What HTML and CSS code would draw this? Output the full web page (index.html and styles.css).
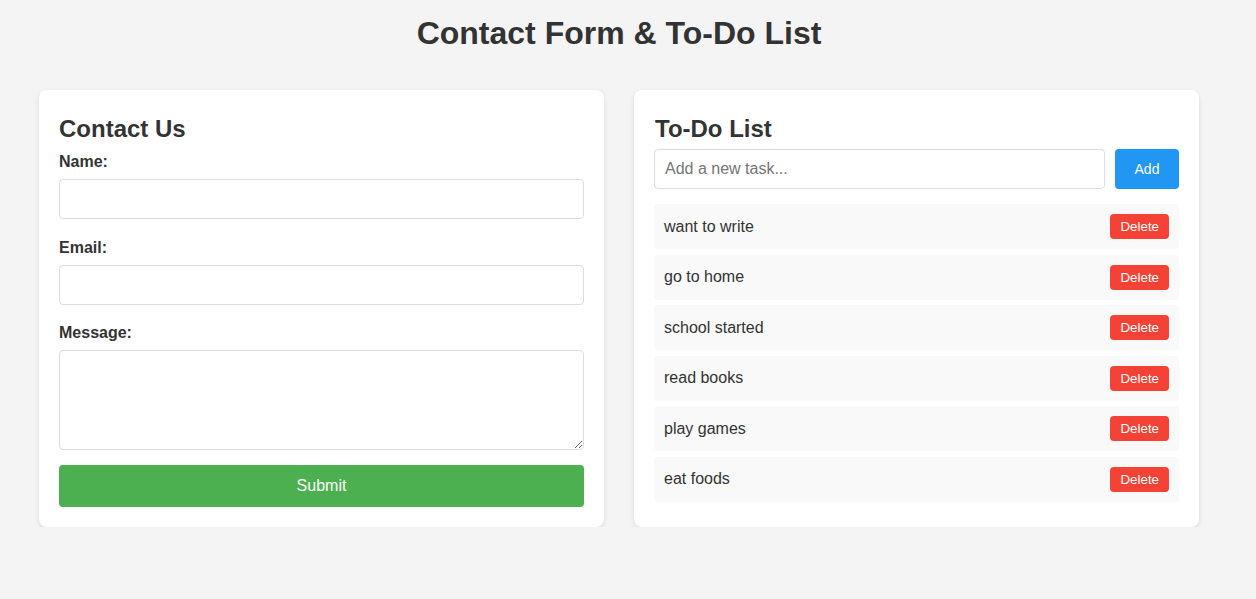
FILE: index.html
```html
<!DOCTYPE html>
<html lang="en">
<head>
<meta charset="UTF-8">
<title>Contact Form &amp; To-Do List</title>
<link rel="stylesheet" href="styles.css">
</head>
<body>
<div class="page">
  <h1 class="title">Contact Form &amp; To-Do List</h1>
  <div class="row">
    <section class="card">
      <h2 class="card-title">Contact Us</h2>
      <form class="contact-form">
        <label class="field-label" for="name">Name:</label>
        <input class="field" type="text" id="name">
        <label class="field-label" for="email">Email:</label>
        <input class="field" type="email" id="email">
        <label class="field-label" for="message">Message:</label>
        <textarea class="field field-area" id="message"></textarea>
        <button class="submit-btn" type="button">Submit</button>
      </form>
    </section>
    <section class="card">
      <h2 class="card-title todo-title">To-Do List</h2>
      <div class="todo-input-row">
        <input class="todo-input" type="text" placeholder="Add a new task...">
        <button class="add-btn" type="button">Add</button>
      </div>
      <ul class="todo-list">
        <li class="todo-item"><span>want to write</span><button class="delete-btn" type="button">Delete</button></li>
        <li class="todo-item"><span>go to home</span><button class="delete-btn" type="button">Delete</button></li>
        <li class="todo-item"><span>school started</span><button class="delete-btn" type="button">Delete</button></li>
        <li class="todo-item"><span>read books</span><button class="delete-btn" type="button">Delete</button></li>
        <li class="todo-item"><span>play games</span><button class="delete-btn" type="button">Delete</button></li>
        <li class="todo-item"><span>eat foods</span><button class="delete-btn" type="button">Delete</button></li>
      </ul>
    </section>
  </div>
</div>
</body>
</html>
```
FILE: styles.css
```css
* { box-sizing: border-box; }

body {
  margin: 0;
  background: #f4f4f4;
  font-family: "Liberation Sans", Arial, sans-serif;
  color: #333;
}

.page {
  padding: 15px 18px 0 0;
}

.title {
  margin: 0 0 38px;
  text-align: center;
  font-size: 32px;
  font-weight: bold;
  color: #333;
}

.row {
  display: flex;
  justify-content: center;
  gap: 30px;
}

.card {
  width: 565px;
  background: #fff;
  border-radius: 8px;
  padding: 20px;
  box-shadow: 0 2px 5px rgba(0, 0, 0, 0.1);
}

.card-title {
  margin: 5px 0 10px;
  font-size: 24px;
  font-weight: bold;
  color: #333;
}

.todo-title {
  margin-bottom: 6px;
  padding-left: 1px;
}

.contact-form {
  display: flex;
  flex-direction: column;
}

.field-label {
  display: block;
  font-weight: bold;
  font-size: 16px;
  margin-bottom: 8px;
}

.field {
  display: block;
  width: 100%;
  height: 40px;
  padding: 10px;
  border: 1px solid #ddd;
  border-radius: 4px;
  font-family: "Liberation Sans", Arial, sans-serif;
  font-size: 16px;
  margin: 0 0 19.5px;
  background: #fff;
}

.field-area {
  height: 100px;
  margin-bottom: 15px;
}

.submit-btn {
  display: block;
  width: 100%;
  height: 42px;
  border: none;
  border-radius: 4px;
  background: #4caf50;
  color: #fff;
  font-family: "Liberation Sans", Arial, sans-serif;
  font-size: 16px;
  cursor: pointer;
}

.todo-input-row {
  display: flex;
  gap: 10px;
  margin-bottom: 15px;
}

.todo-input {
  flex: 1;
  height: 40px;
  padding: 10px;
  border: 1px solid #ddd;
  border-radius: 4px;
  font-family: "Liberation Sans", Arial, sans-serif;
  font-size: 16px;
  color: #333;
}

.todo-input::placeholder {
  color: #757575;
}

.add-btn {
  width: 64px;
  height: 40px;
  border: none;
  border-radius: 4px;
  background: #2196f3;
  color: #fff;
  font-family: "Liberation Sans", Arial, sans-serif;
  font-size: 14px;
  cursor: pointer;
}

.todo-list {
  list-style: none;
  margin: 0;
  padding: 0;
}

.todo-item {
  display: flex;
  align-items: center;
  justify-content: space-between;
  background: #f9f9f9;
  border-radius: 4px;
  padding: 10px;
  margin-bottom: 5.5px;
  font-size: 16px;
  color: #333;
}

.delete-btn {
  border: none;
  border-radius: 4px;
  background: #f44336;
  color: #fff;
  font-family: "Liberation Sans", Arial, sans-serif;
  font-size: 13.333px;
  padding: 5px 10px;
  cursor: pointer;
}
```
